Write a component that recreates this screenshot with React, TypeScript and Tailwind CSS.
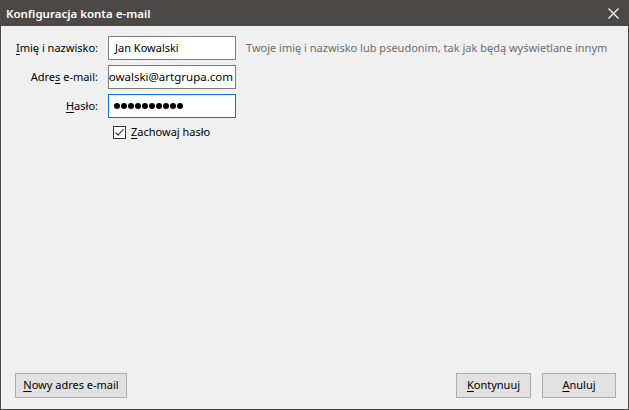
const font = { fontFamily: '"Segoe UI", "Noto Sans", sans-serif' };

function Btn({ mn, rest, w }: { mn: string; rest: string; w: string }) {
  return (
    <button
      className={`${w} h-[25px] border border-[#adadad] bg-[#e1e1e1] text-[11px] text-black flex items-center justify-center`}
    >
      <span className="underline underline-offset-2">{mn}</span>
      {rest}
    </button>
  );
}

export default function App() {
  return (
    <div
      className="w-[629px] h-[410px] flex flex-col border border-[#4b4845] bg-[#f0f0f0] text-[11px] text-black overflow-hidden"
      style={font}
    >
      {/* Title bar */}
      <div className="h-[25px] bg-[#4b4845] flex items-center justify-between pl-[5px] pr-[9px] shrink-0">
        <span className="text-white font-semibold text-[11.5px]">Konfiguracja konta e-mail</span>
        <svg width="11" height="11" viewBox="0 0 11 11" className="text-white">
          <path d="M0.5 0.5 L10.5 10.5 M10.5 0.5 L0.5 10.5" stroke="currentColor" strokeWidth="1.2" />
        </svg>
      </div>

      {/* Body */}
      <div className="flex-1 flex flex-col pt-[10px]">
        <div className="grid grid-cols-[82px_128px_1fr] gap-x-[10px] gap-y-[5px] pl-[15px] items-center">
          <label className="text-right whitespace-nowrap">
            <span className="underline underline-offset-2">I</span>mię i nazwisko:
          </label>
          <div className="h-[24px] border border-[#7a7a7a] bg-white flex items-center px-[6px] whitespace-nowrap overflow-hidden">
            Jan Kowalski
          </div>
          <span className="text-[#6d6d6d] whitespace-nowrap overflow-hidden">
            Twoje imię i nazwisko lub pseudonim, tak jak będą wyświetlane innym
          </span>

          <label className="text-right whitespace-nowrap">
            Adre<span className="underline underline-offset-2">s</span> e-mail:
          </label>
          <div className="h-[24px] border border-[#7a7a7a] bg-white flex items-center justify-end pr-[2px] whitespace-nowrap overflow-hidden text-[11.5px]">
            jan.kowalski@artgrupa.com
          </div>
          <span />

          <label className="text-right whitespace-nowrap">
            <span className="underline underline-offset-2">H</span>asło:
          </label>
          <div className="h-[24px] border border-[#0078d7] bg-white flex items-center gap-[1px] px-[5px]">
            {Array.from({ length: 10 }).map((_, i) => (
              <span key={i} className="w-[6px] h-[6px] rounded-full bg-black" />
            ))}
          </div>
          <span />

          <span />
          <div className="flex items-center gap-[5px] pl-[5px] mt-[1px]">
            <span className="w-[13px] h-[13px] border border-[#333] bg-white flex items-center justify-center">
              <svg width="11" height="11" viewBox="0 0 11 11">
                <path d="M1.5 5.5 L4.2 8.2 L9.5 2" fill="none" stroke="#333" strokeWidth="1.1" />
              </svg>
            </span>
            <span>
              <span className="underline underline-offset-2">Z</span>achowaj hasło
            </span>
          </div>
          <span />
        </div>

        <div className="flex-1" />

        {/* Footer */}
        <div className="flex items-center pl-[14px] pr-[12px] pb-[11px]">
          <Btn mn="N" rest="owy adres e-mail" w="w-[112px]" />
          <div className="flex-1" />
          <div className="flex gap-[11px]">
            <Btn mn="K" rest="ontynuuj" w="w-[75px]" />
            <Btn mn="A" rest="nuluj" w="w-[74px]" />
          </div>
        </div>
      </div>
    </div>
  );
}
